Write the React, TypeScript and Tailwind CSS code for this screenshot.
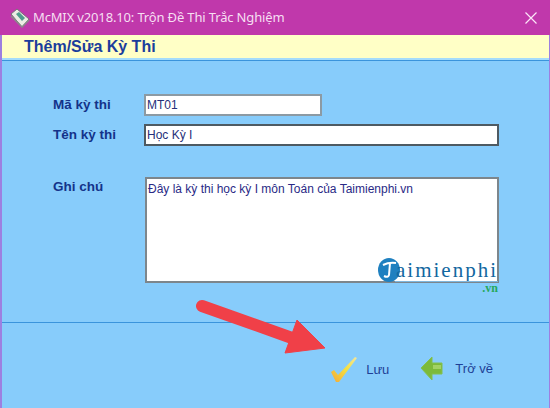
export default function App() {
  return (
    <div className="relative w-[550px] h-[408px] overflow-hidden flex flex-col bg-[#87ccfb] font-['Liberation_Sans',sans-serif]">
      <header className="h-[35px] shrink-0 bg-[#c038ab] flex items-center pl-[10px] pr-[13px]">
        <svg width="20" height="20" viewBox="0 0 20 20" className="shrink-0">
          <path d="M1 6 L7 1 L19 11 L12 19 Z" fill="#ecece4" stroke="#77707a" strokeWidth="1" />
          <path d="M6 6 L9 4 L15 10 L12 13 Z" fill="#4f9c8c" />
          <path d="M1 8 L12 19 L19 12" fill="none" stroke="#8a8a8a" strokeWidth="1.5" />
        </svg>
        <span className="ml-[3px] text-[13px] tracking-[-0.15px] leading-none font-['Noto_Sans',sans-serif] text-[#f6dff2]">McMIX v2018.10: Trộn Đề Thi Trắc Nghiệm</span>
        <svg width="12" height="12" viewBox="0 0 12 12" className="ml-auto">
          <path d="M0.5 0.5 L11.5 11.5 M11.5 0.5 L0.5 11.5" stroke="#fbe6f7" strokeWidth="1.2" />
        </svg>
      </header>

      <div className="flex-1 flex flex-col border-l-2 border-r border-[#9d7fe0]">
        <div className="h-[23px] shrink-0 bg-[#ffffc6] flex items-center pl-[22px]">
          <span className="text-[16px] font-bold text-[#1b3d9c]">Thêm/Sửa Kỳ Thi</span>
        </div>
        <div className="h-[3px] shrink-0 bg-[#a5dcfb] border-b border-[#3a94dc]" />

        <div className="flex-1 flex flex-col pl-[51px] pt-[33px]">
          <div className="flex items-center h-[22px]">
            <span className="w-[91px] text-[13.5px] font-bold text-[#14338a]">Mã kỳ thi</span>
            <div className="w-[178px] h-[22px] bg-white border-2 border-[#8c9aa3] flex items-center pl-[1px] text-[12px] text-[#26307a]">MT01</div>
          </div>
          <div className="flex items-center h-[22px] mt-[8px]">
            <span className="w-[91px] text-[13.5px] font-bold text-[#14338a]">Tên kỳ thi</span>
            <div className="w-[355px] h-[22px] bg-white border-2 border-[#4e5a62] flex items-center pl-[1px] text-[12px] text-[#26307a]">Học Kỳ I</div>
          </div>
          <div className="flex items-start mt-[31px]">
            <span className="w-[91px] text-[13.5px] font-bold text-[#14338a]">Ghi chú</span>
            <div className="w-[354px] h-[106px] bg-white border-2 border-[#7d868c] ml-[1px] pl-[1px] pt-[1px] text-[12px] text-[#2a2a86]">Đây là kỳ thi học kỳ I môn Toán của Taimienphi.vn</div>
          </div>
        </div>

        <div className="h-[86px] shrink-0 border-t border-[#3a94dc] flex items-start justify-end pr-[56px] pt-[33px]">
          <div className="flex items-center">
            <svg width="28" height="28" viewBox="0 0 28 28">
              <defs>
                <linearGradient id="chk" x1="0" y1="1" x2="1" y2="0">
                  <stop offset="0" stopColor="#f2a83a" />
                  <stop offset="0.55" stopColor="#f4e040" />
                  <stop offset="1" stopColor="#f2e6a0" />
                </linearGradient>
              </defs>
              <path d="M1 16 L4 14 L8 19 L25 1 L27 2 L9 26 L6 26 Z" fill="url(#chk)" />
            </svg>
            <span className="ml-[8px] text-[13px] text-[#1e3f96]">Lưu</span>
          </div>
          <div className="flex items-center ml-[31px]">
            <svg width="24" height="25" viewBox="0 0 24 25">
              <path d="M1 12 L12 1 L12 7 L22 7 L22 18 L12 18 L12 24 Z" fill="#7cba3a" stroke="#82c050" strokeWidth="1" strokeLinejoin="round" />
              <path d="M13 9 L21 9 L21 13 L13 13 Z" fill="#a2d264" />
            </svg>
            <span className="ml-[11px] text-[13px] text-[#1e3f96]">Trở về</span>
          </div>
        </div>
      </div>

      <svg width="140" height="60" viewBox="0 0 140 60" className="absolute left-[195px] top-[296px]">
        <path d="M7 10 L97 42" stroke="#f04048" strokeWidth="12" strokeLinecap="round" />
        <path d="M102 24 L130 52 L90 57 Z" fill="#f04048" stroke="#f04048" strokeWidth="1" strokeLinejoin="round" />
      </svg>

      <div className="absolute left-[378px] top-[258px] flex items-center">
        <svg width="22" height="24" viewBox="0 0 22 24" className="shrink-0">
          <ellipse cx="11" cy="12" rx="11" ry="12" fill="#1f80c0" />
          <path d="M5 7 Q11 4 18 5 M12 5 L11 17 Q10 20 6 18" fill="none" stroke="#fff" strokeWidth="2" />
        </svg>
        <span className="-ml-[4px] text-[21px] leading-none tracking-[2px] font-['Liberation_Serif',serif] text-[#12679f]">aimienphi</span>
      </div>
      <div className="absolute left-[395px] top-[281px] w-[103px] h-px bg-[#7fb6dc]" />
      <div className="absolute left-[378px] top-[282px] w-[120px] text-right text-[12px] leading-none font-['Liberation_Serif',serif] font-bold text-[#25a85c]">.vn</div>
    </div>
  );
}
